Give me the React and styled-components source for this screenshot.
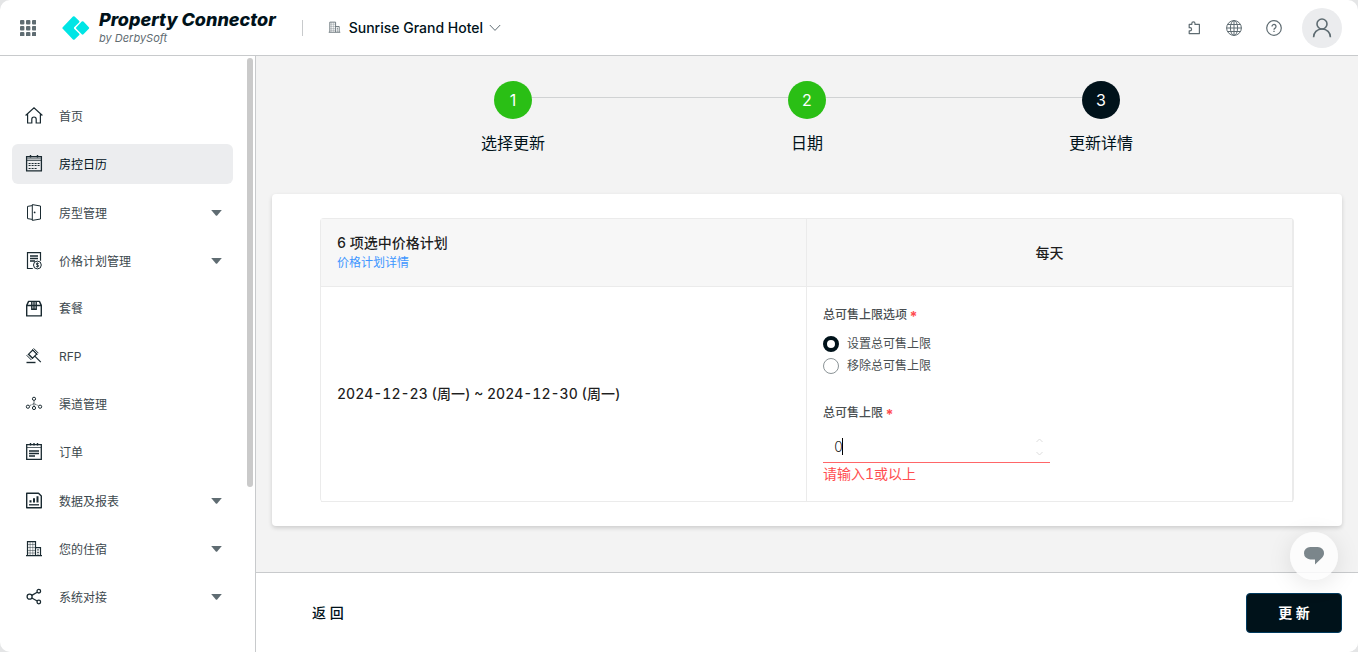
import React, { useState } from "react";
import styled, { createGlobalStyle, css } from "styled-components";

const colors = {
  ink: "#00121a",
  text: "#3c484e",
  muted: "#5f6c72",
  line: "#c8cacc",
  cell: "#ebebeb",
  page: "#f3f3f3",
  green: "#2abf15",
  red: "#ff4d4f",
  link: "#4096ff",
};

const GlobalStyle = createGlobalStyle`
  * {
    box-sizing: border-box;
  }

  body {
    margin: 0;
    background: #e4e5e6;
    color: ${colors.ink};
    font-family: Inter, "Noto Sans CJK SC", sans-serif;
    font-size: 14px;
    line-height: 20px;
  }

  button,
  input {
    font: inherit;
    color: inherit;
  }

  button {
    border: 0;
    padding: 0;
    background: none;
    cursor: pointer;
  }
`;

const Page = styled.div`
  display: flex;
  flex-direction: column;
  height: 100vh;
  background: #fff;
  border-radius: 10px;
  overflow: hidden;
`;

const Header = styled.header`
  display: flex;
  align-items: center;
  flex: none;
  height: 56px;
  padding: 0 16px 0 20px;
  border-bottom: 1px solid ${colors.line};
`;

const IconButton = styled.button`
  display: flex;
  color: ${colors.muted};
`;

const Brand = styled.a`
  display: flex;
  align-items: center;
  gap: 9px;
  margin-left: 26px;
  color: ${colors.ink};
  text-decoration: none;
`;

const BrandName = styled.div`
  font-size: 18px;
  font-weight: 800;
  font-style: italic;
  line-height: 20px;
`;

const BrandOwner = styled.div`
  color: ${colors.muted};
  font-size: 11px;
  font-style: italic;
  line-height: 16px;
`;

const Divider = styled.span`
  width: 1px;
  height: 16px;
  margin: 0 25px 0 26px;
  background: ${colors.line};
`;

const HotelButton = styled.button`
  display: flex;
  align-items: center;
  gap: 8px;
  font-weight: 500;

  svg {
    color: ${colors.muted};
  }

  svg:last-child {
    margin-left: -2px;
  }
`;

const HeaderActions = styled.div`
  display: flex;
  align-items: center;
  gap: 24px;
  margin-left: auto;
`;

const Avatar = styled.button`
  display: flex;
  align-items: center;
  justify-content: center;
  width: 40px;
  height: 40px;
  margin-left: -4px;
  border-radius: 50%;
  background: #ebecee;
  color: ${colors.muted};
`;

const Body = styled.div`
  display: flex;
  flex: 1;
  min-height: 0;
`;

const Sidebar = styled.aside`
  display: flex;
  flex: none;
  width: 256px;
  padding-right: 2px;
  border-right: 1px solid ${colors.line};
`;

const Nav = styled.nav`
  display: flex;
  flex: 1;
  flex-direction: column;
  gap: 8px;
  padding: 40px 14px 8px 12px;
`;

const ScrollThumb = styled.div`
  width: 6px;
  height: 72%;
  margin-top: 2px;
  border-radius: 3px;
  background: #cacaca;
`;

const NavItem = styled.a`
  display: flex;
  align-items: center;
  gap: 16px;
  height: 40px;
  padding: ${(props) => (props.$group ? "2px 11px 0 13px" : "0 11px 0 13px")};
  border-radius: 6px;
  color: ${colors.text};
  font-size: 12px;
  text-decoration: none;

  span {
    flex: 1;
    padding-top: 2px;
  }

  svg {
    flex: none;
    color: #1a2a31;
  }

  ${(props) =>
    props.$active &&
    css`
      background: #ecedef;
      color: ${colors.ink};
    `}
`;

const Content = styled.div`
  display: flex;
  flex: 1;
  flex-direction: column;
  min-width: 0;
`;

const Main = styled.main`
  flex: 1;
  min-height: 0;
  padding: 25px 16px 0;
  background: ${colors.page};
`;

const Steps = styled.ol`
  display: flex;
  width: calc(80% + 26px);
  margin: 0 auto;
  padding: 0;
  list-style: none;
`;

const Step = styled.li`
  position: relative;
  flex: 1;
  font-size: 16px;
  line-height: 24px;
  text-align: center;

  &:not(:first-child)::before {
    content: "";
    position: absolute;
    top: 16px;
    right: 50%;
    width: 100%;
    height: 1px;
    background: #d0d2d3;
  }
`;

const StepNumber = styled.div`
  position: relative;
  z-index: 1;
  display: flex;
  align-items: center;
  justify-content: center;
  width: 38px;
  height: 38px;
  margin: 0 auto 12px;
  border-radius: 50%;
  background: ${(props) => (props.$done ? colors.green : colors.ink)};
  color: #fff;
`;

const Card = styled.section`
  margin-top: 39px;
  padding: 24px 48px;
  border-radius: 4px;
  background: #fff;
  box-shadow: 0 2px 4px rgba(0, 0, 0, 0.16);
`;

const Table = styled.table`
  width: 100%;
  table-layout: fixed;
  border: 1px solid ${colors.cell};
  border-bottom: 0;
  border-radius: 4px;
  border-spacing: 0;
  font-variant-numeric: tabular-nums;
`;

const HeadCell = styled.th`
  height: 68px;
  padding: 8px 16px;
  border-right: 1px solid ${colors.cell};
  border-bottom: 1px solid ${colors.cell};
  background: #f7f7f7;
  color: rgba(0, 0, 0, 0.88);
  font-weight: 500;
  text-align: ${(props) => props.$align || "left"};
`;

const Cell = styled.td`
  padding: 16px;
  border-right: 1px solid ${colors.cell};
  border-bottom: 1px solid ${colors.cell};
  color: rgba(0, 0, 0, 0.88);
  font-weight: 500;
`;

const DetailLink = styled.a`
  display: block;
  color: ${colors.link};
  font-size: 12px;
  font-weight: 400;
  text-decoration: none;
`;

const Field = styled.fieldset`
  margin: 0 0 24px;
  padding: 0;
  border: 0;
  font-size: 12px;
  font-weight: 400;
`;

const fieldLabel = css`
  display: block;
  margin-bottom: 8px;
  padding: 2px 0 0;
  color: #4a4f52;
  font-size: 12px;
  font-weight: 500;

  b {
    margin-left: 2px;
    color: ${colors.red};
    font-size: 14px;
    line-height: 14px;
    vertical-align: -3px;
  }
`;

const Legend = styled.legend`
  ${fieldLabel}
`;

const Label = styled.label`
  ${fieldLabel}
`;

const RadioLabel = styled.label`
  display: flex;
  align-items: center;
  gap: 8px;
  height: 22px;
  color: #4a4f52;
`;

const Radio = styled.input`
  appearance: none;
  width: 16px;
  height: 16px;
  margin: 0;
  border: 1px solid #8c9497;
  border-radius: 50%;

  &:checked {
    border: 4px solid ${colors.ink};
  }
`;

const NumberBox = styled.div`
  position: relative;
  display: flex;
  align-items: center;
  width: 227px;
  height: 32px;
  border-bottom: 1px solid #ff6668;
`;

const NumberInput = styled.input`
  flex: 1;
  min-width: 0;
  height: 31px;
  padding: 0 11px;
  border: 0;
  outline: 0;
  background: none;
  caret-color: transparent;
  font-weight: 300;
`;

const Caret = styled.span`
  position: absolute;
  left: 19px;
  top: 7px;
  width: 1px;
  height: 17px;
  background: #000;
`;

const Spinner = styled.div`
  display: flex;
  flex-direction: column;
  gap: 8px;
  margin-right: 7px;

  button {
    display: flex;
    color: #dcdcdc;
  }
`;

const ErrorText = styled.p`
  margin: 0;
  color: ${colors.red};
  line-height: 22px;
  font-weight: 400;
`;

const Footer = styled.footer`
  display: flex;
  align-items: center;
  justify-content: space-between;
  flex: none;
  height: 80px;
  padding: 0 16px 0 56px;
  border-top: 1px solid ${colors.line};
  background: #fff;
`;

const BackButton = styled.button`
  font-weight: 500;
`;

const SubmitButton = styled.button`
  width: 96px;
  height: 40px;
  border: 1px solid #003a5e;
  border-radius: 4px;
  background: ${colors.ink};
  color: #fff;
  font-weight: 700;
`;

const ChatButton = styled.button`
  position: fixed;
  right: 20px;
  bottom: 72px;
  display: flex;
  align-items: center;
  justify-content: center;
  width: 48px;
  height: 48px;
  border-radius: 50%;
  background: rgba(253, 253, 253, 0.85);
  box-shadow: 0 4px 24px rgba(0, 0, 0, 0.1);
  color: #7b868b;
`;

const Icon = ({ size = 18, box = 18, width, height, children }) => (
  <svg
    width={width || size}
    height={height || size}
    viewBox={width ? `0 0 ${width} ${height}` : `0 0 ${box} ${box}`}
    fill="none"
    stroke="currentColor"
    strokeWidth="1"
    aria-hidden="true"
  >
    {children}
  </svg>
);

const GridIcon = () => (
  <Icon size={16} box={16}>
    <g fill="currentColor" stroke="none">
      {[0, 6, 12].map((y) =>
        [0, 6, 12].map((x) => (
          <rect key={`${x}-${y}`} x={x} y={y} width="4.4" height="4.4" rx="1" />
        ))
      )}
    </g>
  </Icon>
);

const LogoMark = () => (
  <Icon width={28} height={24}>
    <g fill="#00e5e5" stroke="#00e5e5" strokeWidth="2.4" strokeLinejoin="round">
      <path d="M11.8 1.4 16.2 5.6 10.8 11v2l5.4 5.4-4.4 4.2L1.6 12z" />
      <path d="M20.6 6.4 26 12 20.6 17.4 15.2 12z" />
    </g>
  </Icon>
);

const ChevronIcon = () => (
  <Icon width={12} height={8}>
    <path d="M.8 1 6 6.4 11.2 1" />
  </Icon>
);

const PuzzleIcon = () => (
  <Icon size={16} box={16}>
    <path
      strokeWidth="1.2"
      strokeLinejoin="round"
      d="M3.2 4.4h2.6v-.9a1.6 1.6 0 0 1 3.2 0v.9h4.4v9.2H3.2v-2.7h.8a1.6 1.6 0 0 0 0-3.2h-.8z"
    />
  </Icon>
);

const GlobeIcon = () => (
  <Icon size={16} box={16}>
    <circle cx="8" cy="8" r="7.4" />
    <ellipse cx="8" cy="8" rx="3.6" ry="7.4" />
    <path d="M8 .6v14.8M.6 8h14.8M1.7 4.5h12.6M1.7 11.5h12.6" />
  </Icon>
);

const HelpIcon = () => (
  <Icon size={16} box={16}>
    <circle cx="8" cy="8" r="7.3" strokeWidth="1.2" />
    <path strokeWidth="1.3" d="M6 6.4a2 2 0 1 1 3.1 1.7c-.8.5-1.1.8-1.1 1.6M8 10.8v1.3" />
  </Icon>
);

const UserIcon = () => (
  <Icon size={20} box={20}>
    <g strokeWidth="1.6">
      <circle cx="10" cy="6" r="5" />
      <path d="M1.6 19.2c0-4.6 3.4-8.2 8.4-8.2s8.4 3.6 8.4 8.2" />
    </g>
  </Icon>
);

const HomeIcon = () => (
  <Icon>
    <path strokeWidth="1.2" d="M.6 8.5 9 .9l8.4 7.6M2.6 7.2V16h4.2v-3.8a2.2 2.2 0 0 1 4.4 0V16h4.2V7.2" />
  </Icon>
);

const CalendarIcon = () => (
  <Icon>
    <path strokeWidth="1.3" d="M1.6 1.6h14.8v14.3H1.6z" />
    <path opacity=".45" strokeWidth="2" d="M2.2 3.4h13.6" />
    <path opacity=".7" d="M2 5.5h14" />
    <path strokeWidth="1.4" d="M5.5 0v2.4M12.5 0v2.4" />
    <path strokeDasharray="2 1" d="M3.6 8.5h11M3.6 10.5h11M3.6 13.5h8" />
  </Icon>
);

const DoorIcon = () => (
  <Icon>
    <path d="M7.3.6 15.5 2v13l-8.2 1.4zM7.3 1.6 2.5 2.4v12.2l4.8.8" />
    <circle cx="9.6" cy="8.4" r=".9" fill="currentColor" stroke="none" />
  </Icon>
);

const PriceIcon = () => (
  <Icon>
    <path strokeWidth="1.2" d="M7.8 16.5H2.5V.6h13v8.2" />
    <path strokeWidth="1.3" d="M5 4h8M5 6.5h8M5 9h5" />
    <circle cx="12.4" cy="13" r="3.9" />
    <path strokeWidth=".9" d="M13.8 11.7c-.6-.8-2.6-.7-2.6.3 0 1.2 2.6.6 2.6 1.9 0 1.1-2 1.2-2.8.3M12.4 10.5v5" />
  </Icon>
);

const PackageIcon = () => (
  <Icon>
    <path strokeWidth="1.4" strokeLinejoin="round" d="M1.7 6.4 3.6 2.4h10.8l1.9 4v10.5H1.7zM1.7 6.5h14.6" />
    <path strokeWidth="1.4" d="M6.8 2.4v7.8h4.4V2.4M9 2.4v7" />
  </Icon>
);

const GavelIcon = () => (
  <Icon>
    <path d="M8.6 1.4l4.8 4.8M7.4 2.4l5 5M2.8 7l5 5M1.6 8.2l4.8 4.8" />
    <path strokeWidth="1.2" d="M7.8 3 3.6 7.2l4 4 4.2-4.2zM9.8 9.2l6 6" />
    <path strokeWidth="1.4" d="M1.5 15.5h9" />
  </Icon>
);

const NetworkIcon = () => (
  <Icon>
    <circle cx="9" cy="3.8" r="1.6" />
    <circle cx="2.9" cy="11.7" r="1.6" />
    <circle cx="9" cy="13" r="1.6" />
    <circle cx="15.1" cy="11.7" r="1.6" />
    <path opacity=".7" d="M9 5.6v5.6" />
    <path opacity=".7" strokeDasharray="2 .8" d="M4.7 10.6 9 8.6l4.3 2" />
  </Icon>
);

const OrderIcon = () => (
  <Icon>
    <path strokeWidth="1.3" d="M1.7 1.6h14.6v14.8H1.7z" />
    <path opacity=".7" d="M2 4.5h14" />
    <path strokeWidth="1.4" d="M5.5 0v2.6M9 0v2.6M12.5 0v2.6" />
    <path strokeWidth="1.3" d="M4 8h10M4 10.5h10M4 13h6" />
  </Icon>
);

const ReportIcon = () => (
  <Icon>
    <path strokeWidth="1.4" strokeLinejoin="round" d="M1.7 1.2h11.8l2.8 2.8v11.8H1.7z" />
    <path strokeWidth="2" d="M5.5 10.6V8.2M9 10.6V6.2M12.5 10.6V4.2" />
    <path strokeWidth="1.3" d="M4 12.8h10" />
  </Icon>
);

const BuildingIcon = ({ size }) => (
  <Icon size={size}>
    <path strokeWidth="1.2" d="M2.5 15.4V1.6h8v13.8M10.5 7.6h5v7.8M1 15.6h16" />
    <path opacity=".45" d="M5.1 2v13M7.8 2v13M3 4.5h7M3 7.5h7M3 10.5h7M3 13h7" />
    <path strokeWidth="1.4" strokeDasharray="1.4 1.2" d="M13 9.2v6" />
  </Icon>
);

const ShareIcon = () => (
  <Icon>
    <g strokeWidth="1.3">
      <circle cx="4.6" cy="8.7" r="2.5" />
      <circle cx="13.8" cy="3.2" r="1.8" />
      <circle cx="13.8" cy="14" r="1.8" />
      <path d="M6.8 7.4l5.4-3.2M6.8 10l5.4 3" />
    </g>
  </Icon>
);

const CaretDown = () => (
  <Icon width={11} height={6}>
    <path d="M.2 0h10.6L6.2 5.4q-.7.7-1.4 0z" fill={colors.muted} stroke="none" />
  </Icon>
);

const ChatIcon = () => (
  <Icon width={20} height={18}>
    <path
      fill="currentColor"
      stroke="none"
      d="M6.2 0h7.6a6.2 6.2 0 0 1 6.2 6.2c0 2-.9 3.3-2.2 4.7L11 17.6v-5.2H6.2A6.2 6.2 0 0 1 6.2 0z"
    />
  </Icon>
);

const ArrowIcon = ({ down }) => (
  <Icon width={7} height={5}>
    <path d={down ? "M.5 1l3 3 3-3" : "M.5 4l3-3 3 3"} />
  </Icon>
);

const menu = [
  { label: "首页", icon: HomeIcon },
  { label: "房控日历", icon: CalendarIcon, active: true },
  { label: "房型管理", icon: DoorIcon, group: true },
  { label: "价格计划管理", icon: PriceIcon, group: true },
  { label: "套餐", icon: PackageIcon },
  { label: "RFP", icon: GavelIcon },
  { label: "渠道管理", icon: NetworkIcon },
  { label: "订单", icon: OrderIcon },
  { label: "数据及报表", icon: ReportIcon, group: true },
  { label: "您的住宿", icon: BuildingIcon, group: true },
  { label: "系统对接", icon: ShareIcon, group: true },
];

const steps = [
  { label: "选择更新", done: true },
  { label: "日期", done: true },
  { label: "更新详情", done: false },
];

const TopBar = () => (
  <Header>
    <IconButton type="button">
      <GridIcon />
    </IconButton>
    <Brand href="#">
      <LogoMark />
      <div>
        <BrandName>Property Connector</BrandName>
        <BrandOwner>by DerbySoft</BrandOwner>
      </div>
    </Brand>
    <Divider />
    <HotelButton type="button">
      <BuildingIcon size={13} />
      Sunrise Grand Hotel
      <ChevronIcon />
    </HotelButton>
    <HeaderActions>
      <IconButton type="button">
        <PuzzleIcon />
      </IconButton>
      <IconButton type="button">
        <GlobeIcon />
      </IconButton>
      <IconButton type="button">
        <HelpIcon />
      </IconButton>
      <Avatar type="button">
        <UserIcon />
      </Avatar>
    </HeaderActions>
  </Header>
);

const SideMenu = () => (
  <Sidebar>
    <Nav>
      {menu.map(({ label, icon: ItemIcon, active, group }) => (
        <NavItem key={label} href="#" $active={active} $group={group}>
          <ItemIcon />
          <span>{label}</span>
          {group && <CaretDown />}
        </NavItem>
      ))}
    </Nav>
    <ScrollThumb />
  </Sidebar>
);

const LimitForm = () => {
  const [mode, setMode] = useState("set");
  const [limit, setLimit] = useState("0");
  const invalid = Number(limit) < 1;

  const change = (delta) => setLimit(String(Math.max(0, Number(limit) + delta)));

  return (
    <>
      <Field>
        <Legend>
          总可售上限选项<b>*</b>
        </Legend>
        <RadioLabel>
          <Radio
            type="radio"
            name="mode"
            checked={mode === "set"}
            onChange={() => setMode("set")}
          />
          设置总可售上限
        </RadioLabel>
        <RadioLabel>
          <Radio
            type="radio"
            name="mode"
            checked={mode === "remove"}
            onChange={() => setMode("remove")}
          />
          移除总可售上限
        </RadioLabel>
      </Field>
      <Label htmlFor="limit">
        总可售上限<b>*</b>
      </Label>
      <NumberBox>
        <NumberInput
          id="limit"
          inputMode="numeric"
          value={limit}
          onChange={(e) => setLimit(e.target.value)}
        />
        <Caret />
        <Spinner>
          <button type="button" onClick={() => change(1)}>
            <ArrowIcon />
          </button>
          <button type="button" onClick={() => change(-1)}>
            <ArrowIcon down />
          </button>
        </Spinner>
      </NumberBox>
      {invalid && <ErrorText>请输入1或以上</ErrorText>}
    </>
  );
};

const App = () => (
  <>
    <GlobalStyle />
    <Page>
      <TopBar />
      <Body>
        <SideMenu />
        <Content>
          <Main>
            <Steps>
              {steps.map((step, index) => (
                <Step key={step.label}>
                  <StepNumber $done={step.done}>{index + 1}</StepNumber>
                  {step.label}
                </Step>
              ))}
            </Steps>
            <Card>
              <Table>
                <thead>
                  <tr>
                    <HeadCell>
                      6 项选中价格计划
                      <DetailLink href="#">价格计划详情</DetailLink>
                    </HeadCell>
                    <HeadCell $align="center">每天</HeadCell>
                  </tr>
                </thead>
                <tbody>
                  <tr>
                    <Cell>2024-12-23 (周一) ~ 2024-12-30 (周一)</Cell>
                    <Cell>
                      <LimitForm />
                    </Cell>
                  </tr>
                </tbody>
              </Table>
            </Card>
          </Main>
          <Footer>
            <BackButton type="button">返 回</BackButton>
            <SubmitButton type="submit">更 新</SubmitButton>
          </Footer>
        </Content>
      </Body>
      <ChatButton type="button">
        <ChatIcon />
      </ChatButton>
    </Page>
  </>
);

export default App;
